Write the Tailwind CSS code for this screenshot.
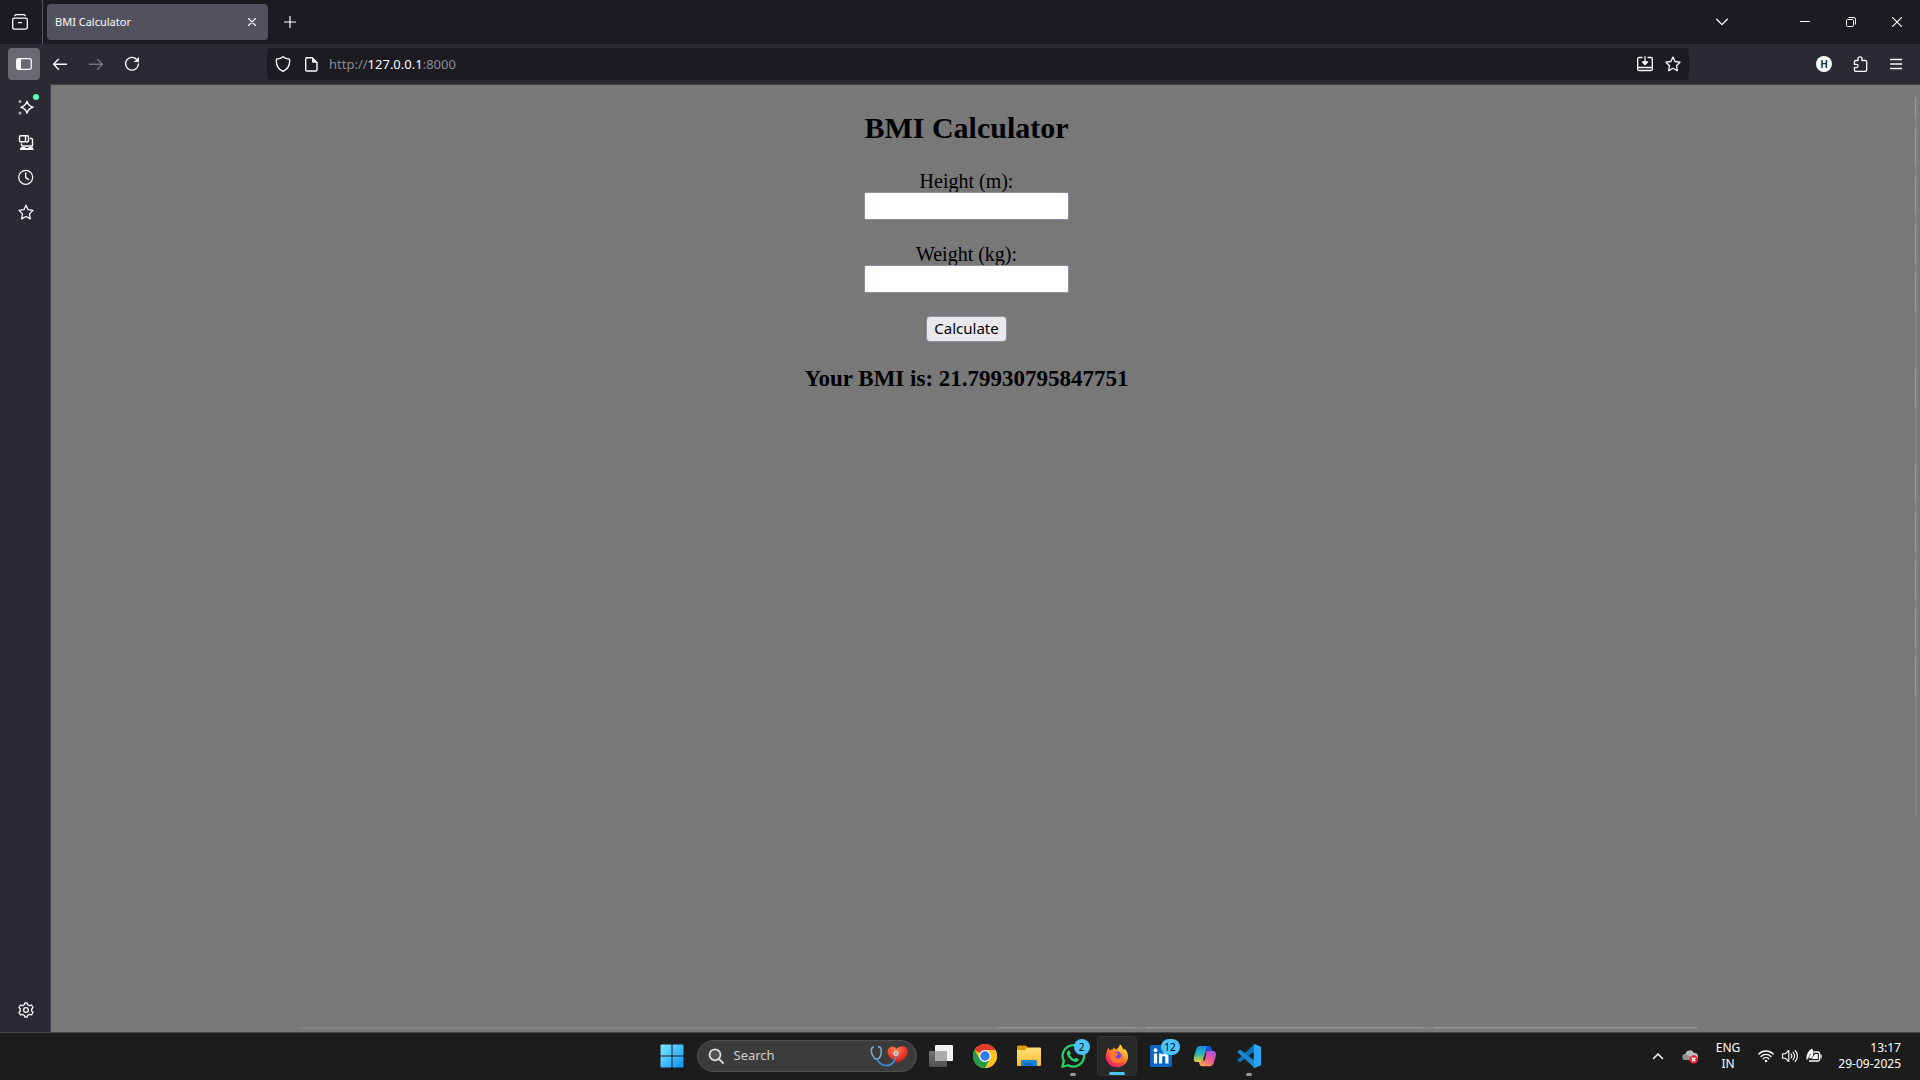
<!DOCTYPE html>
<html lang="en">
<head>
<meta charset="utf-8">
<title>BMI Calculator</title>
<script src="https://cdn.jsdelivr.net/npm/@tailwindcss/browser@4"></script>
</head>
<body class="flex h-screen flex-col overflow-hidden bg-[#1c1b22] font-['Noto_Sans',sans-serif] text-[#fbfbfe]">

  <!-- Tab strip -->
  <header class="flex h-11 shrink-0 items-center bg-[#1c1b22]">
    <button aria-label="Recent browsing" class="flex h-11 w-[43px] items-center justify-center border-r border-[#55545e] pr-0.5">
      <svg class="size-4" viewBox="0 0 16 16" fill="none" stroke="currentColor" stroke-width="1.3" stroke-linecap="round"><path d="M2.8 1.7c.3-.7.8-1 1.5-1h7.4c.7 0 1.200.3 1.500 1"/><rect x=".7" y="4.200" width="14.600" height="11" rx="1.800"/><path d="M6.500 8.700h3"/></svg>
    </button>
    <div class="ml-1 flex h-9 w-[221px] items-center justify-between rounded bg-[#52525e] pr-2 pl-2 shadow">
      <span class="text-[11px]">BMI Calculator</span>
      <button aria-label="Close tab" class="flex size-4 items-center justify-center">
        <svg class="size-2" viewBox="0 0 8 8" stroke="currentColor" stroke-width="1.200" stroke-linecap="round"><path d="M.5.5l7 7M7.500.5l-7 7"/></svg>
      </button>
    </div>
    <button aria-label="New tab" class="ml-1.5 flex size-8 items-center justify-center">
      <svg class="size-3" viewBox="0 0 12 12" stroke="currentColor" stroke-width="1.200" stroke-linecap="round"><path d="M6 .5v11M.5 6h11"/></svg>
    </button>
    <div class="ml-auto flex items-center">
      <button aria-label="List all tabs" class="mr-11 flex size-8 items-center justify-center">
        <svg class="h-2 w-3" viewBox="0 0 12 8" fill="none" stroke="currentColor" stroke-width="1.300" stroke-linecap="round" stroke-linejoin="round"><path d="M.7 1.300L6 6.600l5.300-5.300"/></svg>
      </button>
      <button aria-label="Minimize" class="flex h-11 w-[46px] items-center justify-center"><svg class="size-2.5" viewBox="0 0 10 10" stroke="currentColor"><path d="M0 4.500h10"/></svg></button>
      <button aria-label="Restore" class="flex h-11 w-[46px] items-center justify-center"><svg class="size-2.5" viewBox="0 0 10 10" fill="none" stroke="currentColor"><rect x=".5" y="2.500" width="7" height="7" rx="1"/><path d="M2.500.5H8a1.500 1.500 0 0 1 1.500 1.500v5.500"/></svg></button>
      <button aria-label="Close" class="flex h-11 w-[46px] items-center justify-center"><svg class="size-2.5" viewBox="0 0 10 10" stroke="currentColor" stroke-width="1.100"><path d="M0 0l10 10M10 0L0 10"/></svg></button>
    </div>
  </header>

  <!-- Navigation toolbar -->
  <nav class="flex h-10 shrink-0 items-center gap-1 bg-[#2b2a33] px-2">
    <button aria-label="Sidebar" class="flex size-8 items-center justify-center rounded bg-[#6a6973]">
      <svg class="size-4" viewBox="0 0 16 16"><rect x=".7" y="2.700" width="14.600" height="10.600" rx="1.500" fill="none" stroke="currentColor" stroke-width="1.300"/><path d="M1 3h4v10H1z" fill="currentColor"/></svg>
    </button>
    <button aria-label="Back" class="flex size-8 items-center justify-center">
      <svg class="size-4" viewBox="0 0 16 16" fill="none" stroke="currentColor" stroke-width="1.400" stroke-linecap="round" stroke-linejoin="round"><path d="M14.500 8.300h-13M6.500 3.300l-5 5 5 5"/></svg>
    </button>
    <button aria-label="Forward" disabled class="flex size-8 items-center justify-center text-[#77767f]">
      <svg class="size-4" viewBox="0 0 16 16" fill="none" stroke="currentColor" stroke-width="1.400" stroke-linecap="round" stroke-linejoin="round"><path d="M1.500 8.300h13M9.500 3.300l5 5-5 5"/></svg>
    </button>
    <button aria-label="Reload" class="flex size-8 items-center justify-center">
      <svg class="size-4" viewBox="0 0 16 16"><path d="M12.800 3.500A6.400 6.400 0 1 0 14.400 8" fill="none" stroke="currentColor" stroke-width="1.400" stroke-linecap="round"/><path d="M15 1v4.600a.5.500 0 0 1-.5.500H9.800z" fill="currentColor"/></svg>
    </button>
    <div class="mx-[115px] flex h-8 flex-1 items-center rounded bg-[#1c1b22] px-2">
      <button aria-label="Tracking protection" class="mr-3"><svg class="block size-4" viewBox="0 0 16 16" fill="none" stroke="currentColor" stroke-width="1.300" stroke-linejoin="round"><path d="M8 .7c1.600 1.500 4 2.200 6.600 2.500.5 5.500-1.800 10-6.600 12.100C3.200 13.200.9 8.700 1.400 3.200 4 2.900 6.400 2.200 8 .7z"/></svg></button>
      <button aria-label="Site information" class="mr-2.5"><svg class="block size-4" viewBox="0 0 16 16"><path d="M9 1.700H4A1.300 1.300 0 0 0 2.700 3v10.700A1.300 1.300 0 0 0 4 15h8.700a1.300 1.300 0 0 0 1.300-1.300V6.500z" fill="none" stroke="currentColor" stroke-width="1.400"/><path d="M9 1.200l5.600 5.600H10a1 1 0 0 1-1-1z" fill="currentColor"/></svg></button>
      <a href="http://127.0.0.1:8000" class="flex-1 pt-0.5 text-[13px] text-[#8b8a92]">http://<span class="text-[#fbfbfe]">127.0.0.1</span>:8000</a>
      <button aria-label="Install page" class="mr-3"><svg class="block size-4" viewBox="0 0 16 16" fill="none" stroke="currentColor" stroke-width="1.300" stroke-linecap="round" stroke-linejoin="round"><path d="M5 1.500H2A1.300 1.300 0 0 0 .7 2.800v10.400A1.300 1.300 0 0 0 2 14.500h12a1.300 1.300 0 0 0 1.300-1.300V2.800A1.300 1.300 0 0 0 14 1.500h-3M1 11.500h14M8 .7v7.500"/><path d="M5.500 6L8 8.600 10.500 6z" fill="currentColor"/></svg></button>
      <button aria-label="Bookmark this page"><svg class="block size-4" viewBox="0 0 16 16" fill="none" stroke="currentColor" stroke-width="1.300" stroke-linejoin="round"><path d="M8 1l2.100 4.500 4.900.7-3.500 3.500.8 5L8 12.300l-4.300 2.400.8-5L1 6.200l4.900-.7z"/></svg></button>
    </div>
    <button aria-label="Account" class="flex size-8 items-center justify-center"><span class="flex size-4 items-center justify-center rounded-full bg-white text-[10px] leading-4 font-bold text-[#2b2a33]">H</span></button>
    <button aria-label="Extensions" class="flex size-8 items-center justify-center">
      <svg class="size-4" viewBox="0 0 16 16" fill="none" stroke="currentColor" stroke-width="1.300" stroke-linejoin="round"><path d="M6 4.500V2.800a2 2 0 0 1 4 0v1.700h3.400a1.300 1.300 0 0 1 1.300 1.300v8.200a1.300 1.300 0 0 1-1.300 1.300H3.700a1.300 1.300 0 0 1-1.300-1.300V11.600h2a1.500 1.500 0 0 0 0-3.200h-2V5.800A1.300 1.300 0 0 1 3.700 4.500z"/></svg>
    </button>
    <button aria-label="Menu" class="flex size-8 items-center justify-center">
      <svg class="size-4" viewBox="0 0 16 16" stroke="currentColor" stroke-width="1.300" stroke-linecap="round"><path d="M2.600 3.500h11M2.600 8h11M2.600 12.500h11"/></svg>
    </button>
  </nav>

  <div class="flex min-h-0 flex-1">
    <!-- Sidebar launcher -->
    <aside class="flex w-[50px] shrink-0 flex-col gap-[3px] bg-[#2b2a33] pt-[7px] pb-1.5 pl-2.5">
      <button aria-label="AI chatbot" class="relative flex size-8 items-center justify-center">
        <svg class="size-4" viewBox="0 0 16 16"><path d="M9 2.200c.9 3.500 2.500 5.100 6 6-3.500.9-5.100 2.500-6 6-.9-3.500-2.500-5.100-6-6 3.500-.9 5.100-2.500 6-6z" fill="none" stroke="currentColor" stroke-width="1.400" stroke-linejoin="round"/><circle cx="2" cy="2.500" r="1.500" fill="#b5b4bb"/><circle cx="2" cy="14" r="1.500" fill="#b5b4bb"/></svg>
        <span class="absolute top-[3px] right-[3px] size-1.5 rounded-full bg-[#54ffbd]"></span>
      </button>
      <button aria-label="Synced tabs" class="flex size-8 items-center justify-center">
        <svg class="size-4" viewBox="0 0 16 16" fill="none" stroke="currentColor" stroke-width="1.400" stroke-linejoin="round"><rect x="1.500" y="1.700" width="9" height="6" rx="1"/><path d="M7.500 1.700v6M12 4.500h1.500a1 1 0 0 1 1 1v6.500H5a1.500 1.500 0 0 1-1.500-1.500V9.300"/><path d="M2 16c0-2 .8-3 2-3h3l1 1h2l1-1h2.500c1.200 0 2 1 2 3z" fill="currentColor" stroke="none"/></svg>
      </button>
      <button aria-label="History" class="flex size-8 items-center justify-center">
        <svg class="size-4" viewBox="0 0 16 16" fill="none" stroke="currentColor" stroke-width="1.300" stroke-linecap="round" stroke-linejoin="round"><circle cx="7.700" cy="8.300" r="7"/><path d="M7.700 4V8.600l3 2"/></svg>
      </button>
      <button aria-label="Bookmarks" class="flex size-8 items-center justify-center">
        <svg class="size-4" viewBox="0 0 16 16" fill="none" stroke="currentColor" stroke-width="1.300" stroke-linejoin="round"><path d="M8 1.200l2.100 4.500 4.900.7-3.500 3.500.8 5L8 12.500l-4.300 2.400.8-5L1 6.400l4.900-.7z"/></svg>
      </button>
      <button aria-label="Customize sidebar" class="mt-auto flex size-8 items-center justify-center">
        <svg class="size-4" viewBox="0 0 16 16" fill="none" stroke="currentColor" stroke-width="1.300" stroke-linejoin="round"><circle cx="8" cy="8" r="2.400"/><path d="M6.500 2.500L7 .8h2l.5 1.700L11.500 3.600l2-.6 1.500 2.500L13.700 7v2l1.300 1.500-1.500 2.500-2-.6-2 1.100L9 15.200H7l-.5-1.700-2-1.100-2 .6L1 10.500 2.300 9V7L1 5.500 2.500 3l2 .6z"/></svg>
      </button>
    </aside>

    <!-- Web page -->
    <main class="relative flex-1 border-t border-l border-[#45444c] bg-[#787878] pt-[26px] pr-[38px] text-center font-['Liberation_Serif',serif] text-black">
      <h2 class="mb-[26px] text-[30px] leading-[33px] font-bold">BMI Calculator</h2>
      <form class="flex flex-col items-center gap-[23px] text-[20px] leading-[22px]">
        <div class="flex flex-col items-center">
          <label for="height">Height (m):</label>
          <input id="height" type="text" class="h-7 w-[205px] rounded-xs border border-[#8f8f9d] bg-white px-1">
        </div>
        <div class="flex flex-col items-center">
          <label for="weight">Weight (kg):</label>
          <input id="weight" type="text" class="h-7 w-[205px] rounded-xs border border-[#8f8f9d] bg-white px-1">
        </div>
        <button type="button" class="flex h-[26px] w-[81px] items-center justify-center rounded border border-[#8f8f9d] bg-[#e9e9ed] pb-0.5 font-['Noto_Sans',sans-serif] text-[15px]">Calculate</button>
      </form>
      <h3 class="mt-6 text-[23px] leading-[26px] font-bold">Your BMI is: 21.79930795847751</h3>

      <!-- Faint window-edge traces over the page -->
      <svg class="absolute top-3 right-[3px] h-[720px] w-0.5" viewBox="0 0 2 720" shape-rendering="crispEdges"><path fill="#828282" d="M0 0h2v720H0z"/><path fill="#999" d="M0 0h1v21H0zM0 32h1v37H0zM0 80h1v37H0zM0 128h1v38H0zM0 176h1v38H0zM0 272h1v38H0zM0 368h1v37H0zM0 416h1v38H0zM0 464h1v38H0zM0 512h1v38H0zM0 560h1v38H0z"/></svg>
      <div class="absolute right-[223px] bottom-[3px] left-[247px] h-0.5 bg-[#828282]">
        <div class="ml-auto flex h-px w-[700px] gap-[11px]"><i class="w-[138px] bg-[#999]"></i><i class="w-[277px] bg-[#999]"></i><i class="flex-1 bg-[#999]"></i></div>
      </div>
    </main>
  </div>

  <!-- Taskbar -->
  <footer class="grid h-12 shrink-0 grid-cols-[1fr_auto_1fr] border-t border-[#454545] bg-[#1c1c1c] pb-px text-white">
    <div></div>
    <div class="flex items-center">
      <button aria-label="Start" class="flex h-10 w-11 items-center justify-center">
        <svg class="size-6" viewBox="0 0 24 24"><defs><linearGradient id="win" x1="0" y1="0" x2="1" y2="1" ><stop stop-color="#7eeaff"/><stop offset="1" stop-color="#0a93fb"/></linearGradient></defs><path fill="url(#win)" d="M.5 1.500a1 1 0 0 1 1-1h10v11H.5zM12.500.5h10a1 1 0 0 1 1 1v10h-11zM.5 12.500h11v11h-10a1 1 0 0 1-1-1zM12.500 12.500h11v10a1 1 0 0 1-1 1h-10z"/></svg>
      </button>
      <button class="mr-0.5 ml-[3px] flex h-8 w-[220px] items-center rounded-full border border-[#505050] bg-[#3b3b3b] pr-2 pl-2.5">
        <svg class="size-4" viewBox="0 0 16 16" fill="#555" stroke="#dcdcdc" stroke-width="1.800" stroke-linecap="round"><circle cx="7" cy="6.800" r="5.500"/><path d="M11 11l4 4"/></svg>
        <span class="ml-2.5 text-[13px] text-[#d0d0d0]">Search</span>
        <svg class="ml-auto h-6 w-[38px]" viewBox="0 0 38 24"><defs><radialGradient id="heart" cx=".4" cy=".25" r=".8"><stop stop-color="#ff8a54"/><stop offset=".5" stop-color="#f04030"/><stop offset="1" stop-color="#b80f23"/></radialGradient></defs><path d="M26.500 5c-2-4-9-3-9 3 0 5 5 7.500 10 11 5-2.500 10-6 10.500-11 .3-6-8-8-11.500-3z" fill="url(#heart)"/><path d="M4 3C0 3 1 9 3 12c2 4 5 4 7 1 2-4 2-11-2-10" fill="none" stroke="#7da7cf" stroke-width="1.600"/><path d="M7.500 15c0 3 4 6.500 9 6.500 6 0 9-5 9.500-10" fill="none" stroke="#3b8fdd" stroke-width="1.700"/><circle cx="26" cy="9.500" r="2.500" fill="#cfd6dc"/><circle cx="26" cy="9.500" r="1" fill="#7b8791"/></svg>
      </button>
      <button aria-label="Task view" class="flex h-10 w-11 items-center justify-center">
        <svg class="size-6" viewBox="0 0 24 24"><defs><linearGradient id="tv" x1="0" y1="0" x2="0" y2="1"><stop stop-color="#737373"/><stop offset="1" stop-color="#505050"/></linearGradient></defs><rect y="7" width="18" height="16" rx="1" fill="url(#tv)"/><rect x="6" y="1" width="18" height="16" rx="1" fill="#f2f2f2"/><path d="M6 7h12v10H7a1 1 0 0 1-1-1z" fill="#ababab"/></svg>
      </button>
      <button aria-label="Chrome" class="flex h-10 w-11 items-center justify-center">
        <svg class="size-6" viewBox="0 0 24 24"><circle cx="12" cy="12" r="12" fill="#fcc31e"/><path d="M12 12L1.600 6A12 12 0 0 1 22.400 6z" fill="#e33b2e"/><path d="M1.600 6A12 12 0 0 0 12 24l5.200-9L12 12 6.800 15z" fill="#229a4c"/><path d="M12 6h10.400A12 12 0 0 1 12 24l5.200-9z" fill="#fcc31e"/><circle cx="12" cy="12" r="5.900" fill="#fff"/><circle cx="12" cy="12" r="4.700" fill="#2f7bee"/></svg>
      </button>
      <button aria-label="File Explorer" class="flex h-10 w-11 items-center justify-center">
        <svg class="size-6" viewBox="0 0 24 24"><defs><linearGradient id="fold" x1="0" y1="0" x2="0" y2="1"><stop stop-color="#ffe07b"/><stop offset="1" stop-color="#fdbd2b"/></linearGradient></defs><path d="M0 2.500A1 1 0 0 1 1 1.500h8l2 2-2.500 3H0z" fill="#d99a08"/><path d="M0 6h8l2.500-2.500H23a1 1 0 0 1 1 1V21a1 1 0 0 1-1 1H1a1 1 0 0 1-1-1z" fill="url(#fold)"/><path d="M4 22v-4.500A1.500 1.500 0 0 1 5.500 16h13a1.500 1.500 0 0 1 1.500 1.500V22z" fill="#1683d8"/><path d="M8 19.500h8v1.300H8z" fill="#0b5ba8"/></svg>
      </button>
      <button aria-label="WhatsApp" class="relative flex h-10 w-11 items-center justify-center">
        <svg class="size-6" viewBox="0 0 24 24"><path d="M1.300 22.700l1.600-5.800A10.700 10.700 0 1 1 7.100 21.200z" fill="#1c1c1c" stroke="#25d366" stroke-width="2.200" stroke-linejoin="round"/><path d="M8 6.200c-1.800.6-2.600 2.600-1.800 4.600 1.400 3.400 4 6 7.200 7 2.200.6 4.200-.4 4.400-2.600l-3-1.700-1.500 1.700c-2-.8-3.600-2.400-4.400-4.300L10 9.300z" fill="#25d366"/></svg>
        <span class="absolute top-[3px] left-[23px] flex size-4 items-center justify-center rounded-full bg-[#4cc2ff] text-[10px] leading-4 text-black">2</span>
        <span class="absolute bottom-0 left-[19px] h-[3px] w-1.5 rounded-full bg-[#9a9a9a]"></span>
      </button>
      <button aria-label="Firefox" class="relative mx-0.5 flex h-10 w-10 items-center justify-center rounded border border-[#333] bg-[#292929]">
        <svg class="size-6" viewBox="0 0 24 24"><defs><linearGradient id="fx" x1=".9" y1="0" x2=".2" y2="1"><stop stop-color="#fff44f"/><stop offset=".35" stop-color="#ffa92a"/><stop offset=".65" stop-color="#ff4b3c"/><stop offset="1" stop-color="#e8177e"/></linearGradient></defs><path d="M3.800 3.500c0 1.200.3 2 .9 2.700 1-.7 2-.8 3-.6L9 3.300c.2 1 .7 1.700 1.600 2.300 1.800-.5 3.600-2.600 4.400-5.300 1.500 1.200 2.500 3 3 5 1 .3 1.500 0 1.800-.6 2 2.300 3.300 5 3.300 8C23 18.500 18 23.300 12 23.300S.8 18.500.8 12.500C.8 9 1.800 6 3.800 3.500z" fill="url(#fx)"/><circle cx="12" cy="12.500" r="5" fill="#7542d8"/><path d="M4.500 8c2.500-1 5-.8 6.500.8 2 .3 2.800 1 2 2-1 .7-2.500.6-2.500 2 .2 1.800 3.500 2.500 5 .7 1-1.200.8-3-.5-4.300 2.500.8 4 3 3.500 6-.8 3-4 4.500-7 4-4-.8-7-4-7-8z" fill="#ff7a2d"/></svg>
        <span class="absolute bottom-0 left-[11px] h-[3px] w-4 rounded-full bg-[#4cc2ff]"></span>
      </button>
      <button aria-label="LinkedIn" class="relative flex h-10 w-11 items-center justify-center">
        <svg class="size-[22px]" viewBox="0 0 22 22"><rect width="22" height="22" rx="1.500" fill="#0a66c2"/><g fill="#fff"><circle cx="5.500" cy="5.200" r="1.900"/><path d="M3.900 8.400h3.200V18.500H3.900zM9 8.400h3v1.400c1.500-2.500 6.500-2.500 6.500 2.200v6.500h-3.200v-5.600c0-2.800-3.200-2.500-3.200 0v5.600H9z"/></g></svg>
        <span class="absolute top-[3px] left-[22px] flex h-4 w-[19px] items-center justify-center rounded-full bg-[#4cc2ff] text-[10px] leading-4 text-black">12</span>
      </button>
      <button aria-label="Copilot" class="flex h-10 w-11 items-center justify-center">
        <svg class="size-6" viewBox="0 0 24 24"><defs><linearGradient id="cpa" x1="0" y1="0" x2="0" y2="1"><stop stop-color="#1a8be8"/><stop offset=".5" stop-color="#25b9b0"/><stop offset="1" stop-color="#efd02f"/></linearGradient><linearGradient id="cpb" x1=".8" y1="0" x2=".2" y2="1"><stop stop-color="#a855e8"/><stop offset=".5" stop-color="#ee5a91"/><stop offset="1" stop-color="#ffa64d"/></linearGradient></defs><path d="M7 2h8.500c2 0 2.500 1 3 3l.6 2H15c-2 0-2.600 1-3.200 3L10 15.500c-.6 2-1.500 2.500-3.500 2.500H4c-3 0-3.600-2-3-5L3 6c.7-2.500 1.800-4 4-4z" fill="url(#cpa)"/><path d="M14 2h1.500c2 0 2.500 1 3 3l.6 2H14l-2 1z" fill="#1b4ed0"/><path d="M17 22.300H9.500c-2 0-2.800-1-3.200-3L6 18h.5c2 0 2.900-.5 3.500-2.500l1.800-5.500c.6-2 1.200-3 3.200-3h4.500c3 0 4 2 3.300 5L21 18c-.7 2.500-1.800 4.300-4 4.300z" fill="url(#cpb)"/><path d="M13.500 8.500h-1L10 16.500h1.800z" fill="#1c1c1c"/></svg>
      </button>
      <button aria-label="Visual Studio Code" class="relative flex h-10 w-11 items-center justify-center">
        <svg class="size-6" viewBox="0 0 24 24"><path d="M17.500 0L18 7 3 18.600 0 16.300z" fill="#0b6fb5"/><path d="M17.500 24L18 17 3 5.400 0 7.700z" fill="#1689d2"/><path d="M17.500 0L24 2.800v18.400L17.500 24c-.5-.3-.8-.8-.8-1.300V1.300c0-.5.3-1 .8-1.300z" fill="#2aa5f2"/></svg>
        <span class="absolute bottom-0 left-[19px] h-[3px] w-1.5 rounded-full bg-[#9a9a9a]"></span>
      </button>
    </div>
    <div class="flex items-center justify-end pr-[19px] text-[12px] leading-4">
      <button aria-label="Show hidden icons" class="mr-4 flex w-4 justify-center"><svg class="h-2 w-3" viewBox="0 0 12 8" fill="none" stroke="currentColor" stroke-width="1.500" stroke-linecap="round"><path d="M1.500 6.500L6 2l4.500 4.500"/></svg></button>
      <button aria-label="OneDrive" class="mr-[18px]"><svg class="block size-4" viewBox="0 0 16 16"><path d="M3.500 12a3 3 0 0 1 0-6A4.500 4.500 0 0 1 12 5a3.500 3.500 0 0 1 1 7z" fill="#bdbdbd"/><path d="M3.500 12a3 3 0 0 1 0-6L9 9l-3 3z" fill="#8e8e8e"/><circle cx="11.700" cy="11.500" r="4.300" fill="#e32636"/><path d="M10 9.800l3.400 3.400M13.400 9.800L10 13.200" stroke="#fff" stroke-width="1.300"/></svg></button>
      <button class="mr-[18px] text-center">ENG<br>IN</button>
      <button aria-label="Network, volume and battery" class="mr-4 flex gap-2">
        <svg class="size-4" viewBox="0 0 16 16" fill="none" stroke="currentColor" stroke-width="1.300" stroke-linecap="round"><path d="M.8 6a10.200 10.200 0 0 1 14.400 0M3 8.500a7 7 0 0 1 10 0M5.200 10.800a4 4 0 0 1 5.600 0"/><circle cx="8" cy="13" r="1.300" fill="currentColor" stroke="none"/></svg>
        <svg class="size-4" viewBox="0 0 16 16" fill="none" stroke="currentColor" stroke-width="1.100" stroke-linecap="round" stroke-linejoin="round"><path d="M.6 5.800h2.600L6.800 2.500v11L3.200 10.200H.6zM9 6a3 3 0 0 1 0 4M11 4.200a5.500 5.500 0 0 1 0 7.600M13.200 2.500a8 8 0 0 1 0 11"/></svg>
        <svg class="size-4" viewBox="0 0 16 16"><path d="M7.500 4H12a1.500 1.500 0 0 1 1.500 1.500v6A1.500 1.500 0 0 1 12 13H3" fill="none" stroke="currentColor" stroke-width="1.300"/><path d="M14.200 6.500h1.400v4h-1.400zM9 6h2.800v5H5.500z" fill="currentColor"/><path d="M6 .5c2 3 2 7-.5 9.500L2 10.500l-1.200 2C-.3 8 1 4 6 .5z" fill="currentColor"/><path d="M1 13.500L4.500 6" stroke="#1c1c1c" stroke-width=".7"/></svg>
      </button>
      <button class="text-right"><time datetime="2025-09-29T13:17">13:17<br>29-09-2025</time></button>
    </div>
  </footer>
</body>
</html>
